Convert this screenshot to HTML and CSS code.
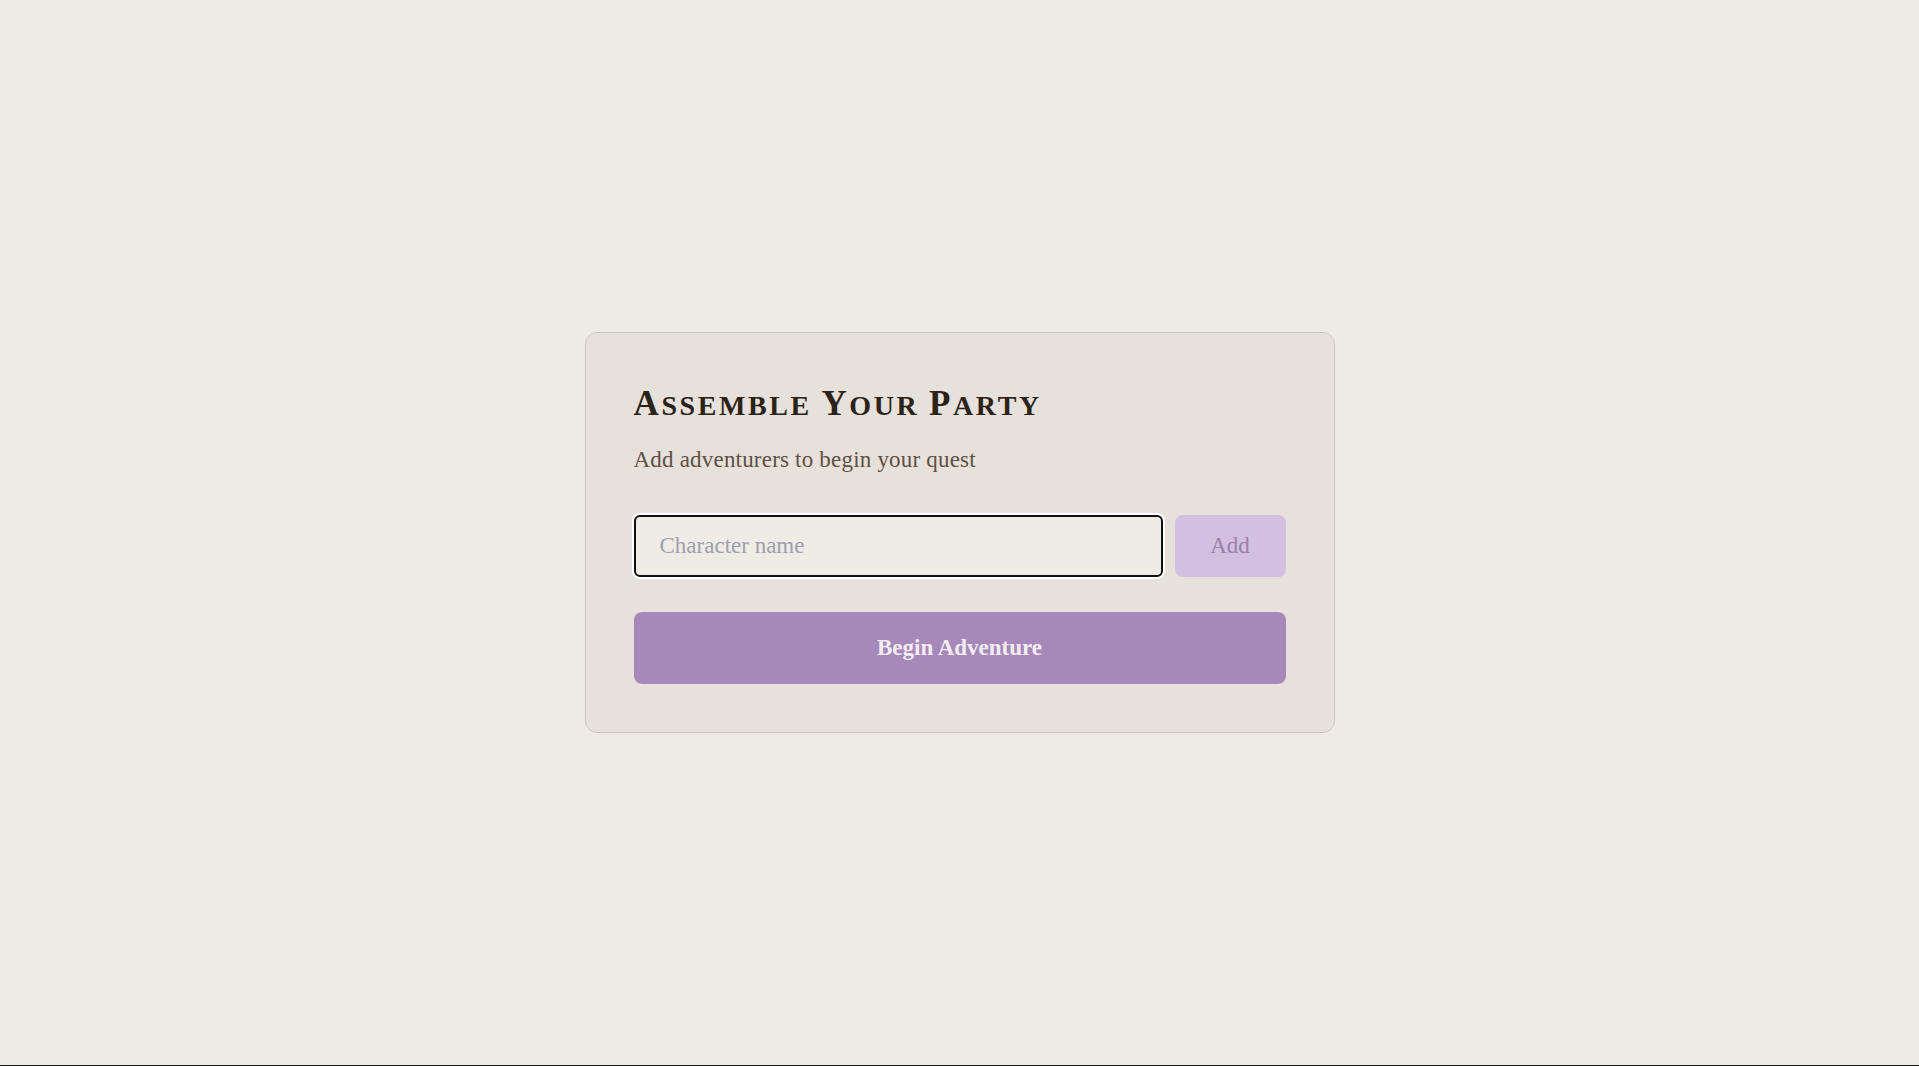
FILE: index.html
```html
<!DOCTYPE html>
<html lang="en">
<head>
<meta charset="utf-8">
<title>Assemble Your Party</title>
<link rel="stylesheet" href="styles.css">
</head>
<body>
<main class="page">
  <section class="card">
    <h1 class="title"><span class="cap">A</span>ssemble <span class="cap">Y</span>our <span class="cap">P</span>arty</h1>
    <p class="subtitle">Add adventurers to begin your quest</p>
    <form class="add-row">
      <input class="name-input" type="text" placeholder="Character name">
      <button class="add-btn" type="button">Add</button>
    </form>
    <button class="begin-btn" type="button">Begin Adventure</button>
  </section>
</main>
</body>
</html>
```

FILE: styles.css
```css
html {
  background: #1b1f1f;
}
body {
  margin: 0;
  background: #eeebe5;
  font-family: "Liberation Serif", "DejaVu Serif", serif;
}
.page {
  min-height: calc(100vh - 1px);
  display: flex;
  align-items: center;
  justify-content: center;
}
.card {
  box-sizing: border-box;
  width: 750px;
  padding: 48px;
  background: #e6e1da;
  border: 1px solid #cec6bb;
  border-radius: 12px;
}
.title {
  margin: 0;
  font-size: 28px;
  line-height: 46px;
  font-weight: 700;
  text-transform: uppercase;
  letter-spacing: 2.6px;
  color: #2c2218;
}
.title .cap {
  font-size: 35px;
}
.subtitle {
  margin: 16px 0 0;
  font-size: 23px;
  line-height: 30px;
  letter-spacing: 0.2px;
  color: #5e5045;
}
.add-row {
  display: flex;
  gap: 12px;
  margin: 40px 0 0;
}
.name-input {
  flex: 1;
  min-width: 0;
  box-sizing: border-box;
  height: 62px;
  padding: 0 24px;
  font-family: inherit;
  font-size: 23px;
  color: #2c2218;
  background: #efebe5;
  border: 2px solid #101010;
  border-radius: 6px;
  outline: none;
  box-shadow: 0 0 0 2px #ffffff;
}
.name-input::placeholder {
  color: #9da0ad;
}
.add-btn {
  width: 111px;
  height: 62px;
  font-family: inherit;
  font-size: 23px;
  color: #9a82a8;
  background: #d3bfdf;
  border: none;
  border-radius: 8px;
}
.begin-btn {
  display: block;
  width: 100%;
  height: 72px;
  margin-top: 35px;
  font-family: inherit;
  font-size: 23px;
  font-weight: 700;
  color: #f3edf1;
  background: #a688ba;
  border: none;
  border-radius: 8px;
}
```
